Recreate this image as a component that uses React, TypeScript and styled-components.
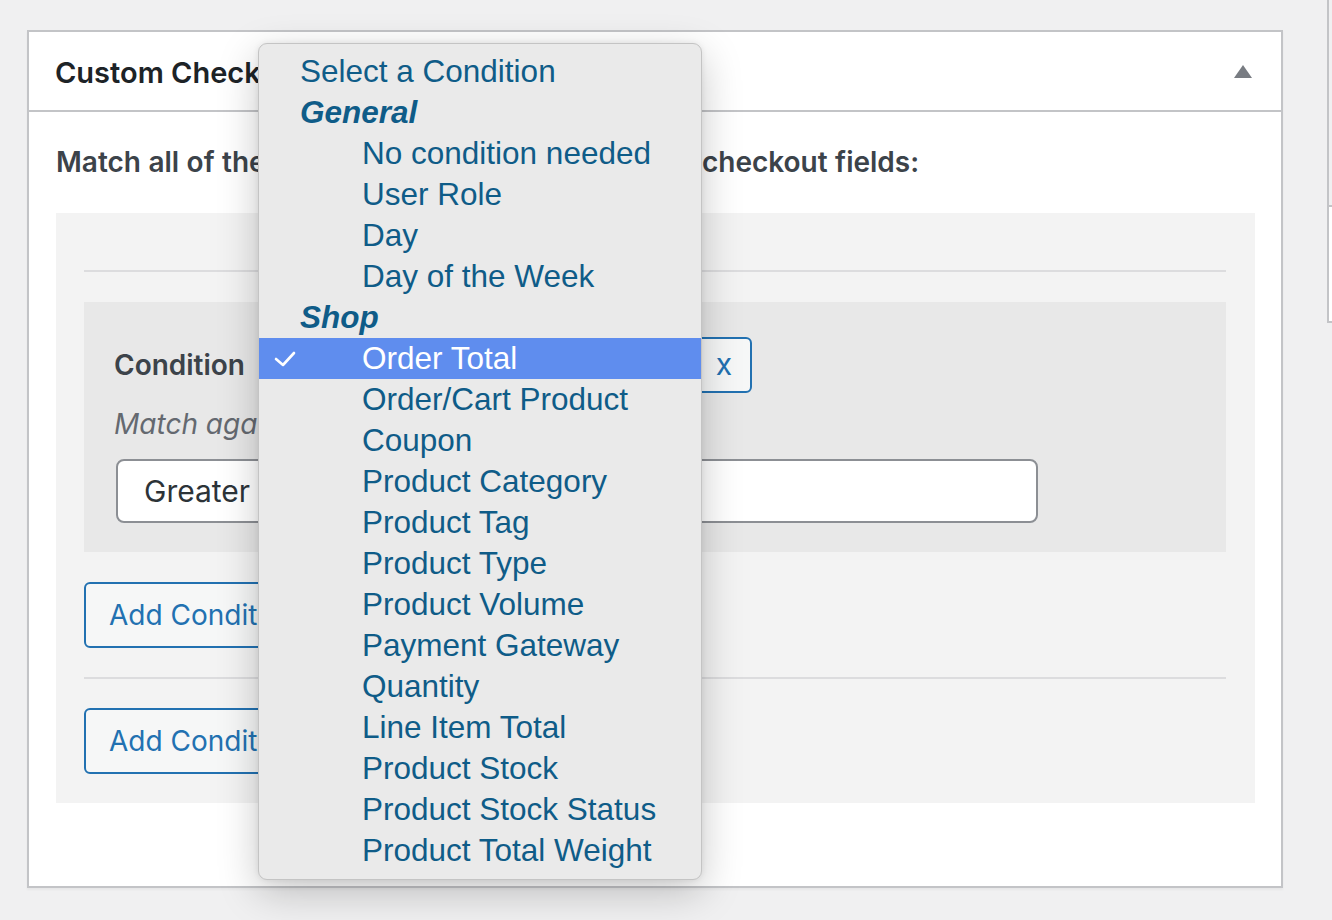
import React from "react";
import styled, { createGlobalStyle } from "styled-components";

const GlobalStyle = createGlobalStyle`
  html, body {
    margin: 0;
    padding: 0;
    background: #f0f0f1;
    overflow: hidden;
  }
  body {
    font-family: Inter, "Liberation Sans", Arial, sans-serif;
  }
`;

const Page = styled.div`
  display: flex;
  align-items: flex-start;
  gap: 44px;
  padding: 30px 0 0 27px;
  width: 1700px;
  height: 920px;
  box-sizing: border-box;
`;

const Postbox = styled.div`
  flex-shrink: 0;
  width: 1256px;
  height: 858px;
  box-sizing: border-box;
  background: #fff;
  border: 2px solid #c3c4c7;
  box-shadow: 0 2px 2px rgba(0, 0, 0, 0.04);
`;

const Header = styled.div`
  height: 78px;
  display: flex;
  align-items: center;
  justify-content: space-between;
  padding: 0 29px 0 26px;
  border-bottom: 2px solid #c3c4c7;
`;

const Title = styled.h2`
  margin: 0;
  font-size: 29px;
  font-weight: 600;
  color: #1d2327;
  padding-top: 2px;
`;

const Toggle = styled.svg`
  width: 18px;
  height: 13px;
  fill: #787c82;
`;

const Inside = styled.div`
  padding: 34px 26px 0 27px;
`;

const Lead = styled.p`
  margin: 0 0 34px;
  font-size: 28px;
  line-height: 33px;
  font-weight: 600;
  color: #3c434a;
  white-space: nowrap;
  word-spacing: 0.4px;
`;

const RulesArea = styled.div`
  height: 590px;
  box-sizing: border-box;
  background: #f3f3f3;
  padding: 57px 29px 0 28px;
  display: flex;
  flex-direction: column;
`;

const Divider = styled.div<{ $after: number }>`
  height: 2px;
  background: #dcdcde;
  margin-bottom: ${(p) => p.$after}px;
`;

const ConditionBox = styled.div`
  height: 250px;
  box-sizing: border-box;
  background: #e8e8e8;
  padding: 35px 30px 0 30px;
  margin-bottom: 30px;
`;

const ConditionRow = styled.div`
  display: flex;
  align-items: center;
  gap: 10px;
  height: 56px;
`;

const Label = styled.span`
  font-size: 28px;
  font-weight: 600;
  color: #3c434a;
  width: 144px;
`;

const SelectWrap = styled.div`
  position: relative;
  width: 412px;
  height: 56px;
`;

const FakeSelect = styled.div`
  height: 100%;
  box-sizing: border-box;
  border: 2px solid #8c8f94;
  border-radius: 8px;
  background: #fff;
  font-size: 30px;
  color: #2c3338;
  display: flex;
  align-items: center;
  padding-left: 24px;
`;

const RemoveButton = styled.button`
  width: 62px;
  height: 56px;
  box-sizing: border-box;
  border: 2px solid #2271b1;
  border-radius: 6px;
  background: #f6f7f7;
  color: #2271b1;
  font-family: inherit;
  font-size: 30px;
  padding: 0 0 2px 6px;
`;

const Hint = styled.p`
  margin: 15px 0 18px;
  font-size: 28px;
  line-height: 33px;
  font-style: italic;
  color: #646970;
`;

const OperatorSelect = styled.div`
  width: 922px;
  height: 64px;
  margin-left: 2px;
  box-sizing: border-box;
  border: 2px solid #8c8f94;
  border-radius: 8px;
  background: #fff;
  display: flex;
  align-items: center;
  padding-left: 26px;
  font-size: 30px;
  color: #2c3338;
`;

const SecondaryButton = styled.button<{ $after: number }>`
  align-self: flex-start;
  height: 66px;
  box-sizing: border-box;
  border: 2px solid #2271b1;
  border-radius: 6px;
  background: #f6f7f7;
  color: #2271b1;
  font-family: inherit;
  font-size: 28px;
  padding: 0 23px;
  margin-bottom: ${(p) => p.$after}px;
`;

const Menu = styled.ul`
  position: absolute;
  left: -10px;
  top: -294px;
  width: 444px;
  margin: 0;
  padding: 7px 0 8px;
  list-style: none;
  box-sizing: border-box;
  background: #eaeaea;
  border: 1px solid #c4c4c4;
  border-radius: 9px;
  box-shadow: 0 12px 40px rgba(0, 0, 0, 0.22), 0 0 6px rgba(0, 0, 0, 0.08);
  font-family: "Liberation Sans", Arial, sans-serif;
  z-index: 10;
`;

type ItemKind = "placeholder" | "group" | "option";

const MenuItem = styled.li<{ $kind: ItemKind; $selected?: boolean }>`
  position: relative;
  height: 41px;
  line-height: 41px;
  font-size: 31.5px;
  white-space: nowrap;
  padding-left: ${(p) => (p.$kind === "option" ? 103 : 41)}px;
  font-weight: ${(p) => (p.$kind === "group" ? 700 : 400)};
  font-style: ${(p) => (p.$kind === "group" ? "italic" : "normal")};
  color: ${(p) => (p.$selected ? "#fff" : "#0f5c88")};
  background: ${(p) => (p.$selected ? "#5f8dee" : "transparent")};
`;

const Check = styled.svg`
  position: absolute;
  left: 15px;
  top: 13px;
  width: 22px;
  height: 16px;
  fill: none;
  stroke: #fff;
  stroke-width: 2.6;
  stroke-linecap: round;
  stroke-linejoin: round;
`;

const Sidebar = styled.div`
  flex-shrink: 0;
  width: 300px;
  margin-top: -30px;
  display: flex;
  flex-direction: column;
`;

const SideEdge = styled.div`
  height: 205px;
  border-left: 2px solid #c3c4c7;
`;

const SideBox = styled.div`
  height: 118px;
  box-sizing: border-box;
  border: 2px solid #c3c4c7;
  background: #fff;
`;

const items: { label: string; kind: ItemKind }[] = [
  { label: "Select a Condition", kind: "placeholder" },
  { label: "General", kind: "group" },
  { label: "No condition needed", kind: "option" },
  { label: "User Role", kind: "option" },
  { label: "Day", kind: "option" },
  { label: "Day of the Week", kind: "option" },
  { label: "Shop", kind: "group" },
  { label: "Order Total", kind: "option" },
  { label: "Order/Cart Product", kind: "option" },
  { label: "Coupon", kind: "option" },
  { label: "Product Category", kind: "option" },
  { label: "Product Tag", kind: "option" },
  { label: "Product Type", kind: "option" },
  { label: "Product Volume", kind: "option" },
  { label: "Payment Gateway", kind: "option" },
  { label: "Quantity", kind: "option" },
  { label: "Line Item Total", kind: "option" },
  { label: "Product Stock", kind: "option" },
  { label: "Product Stock Status", kind: "option" },
  { label: "Product Total Weight", kind: "option" },
];

const selectedValue = "Order Total";

export default function App() {
  return (
    <>
      <GlobalStyle />
      <Page>
        <Postbox>
          <Header>
            <Title>Custom Checkout Fields</Title>
            <Toggle viewBox="0 0 18 13">
              <polygon points="9,0 18,13 0,13" />
            </Toggle>
          </Header>
          <Inside>
            <Lead>Match all of the following rules to show custom checkout fields:</Lead>
            <RulesArea>
              <Divider $after={30} />
              <ConditionBox>
                <ConditionRow>
                  <Label>Condition</Label>
                  <SelectWrap>
                    <FakeSelect>{selectedValue}</FakeSelect>
                    <Menu>
                      {items.map((it) => {
                        const selected = it.label === selectedValue;
                        return (
                          <MenuItem key={it.label} $kind={it.kind} $selected={selected}>
                            {selected && (
                              <Check viewBox="0 0 22 16">
                                <polyline points="2,8 9,14 20,2" />
                              </Check>
                            )}
                            {it.label}
                          </MenuItem>
                        );
                      })}
                    </Menu>
                  </SelectWrap>
                  <RemoveButton>x</RemoveButton>
                </ConditionRow>
                <Hint>Match against</Hint>
                <OperatorSelect>Greater than</OperatorSelect>
              </ConditionBox>
              <SecondaryButton $after={29}>Add Condition</SecondaryButton>
              <Divider $after={29} />
              <SecondaryButton $after={0}>Add Condition Group</SecondaryButton>
            </RulesArea>
          </Inside>
        </Postbox>
        <Sidebar>
          <SideEdge />
          <SideBox />
        </Sidebar>
      </Page>
    </>
  );
}
